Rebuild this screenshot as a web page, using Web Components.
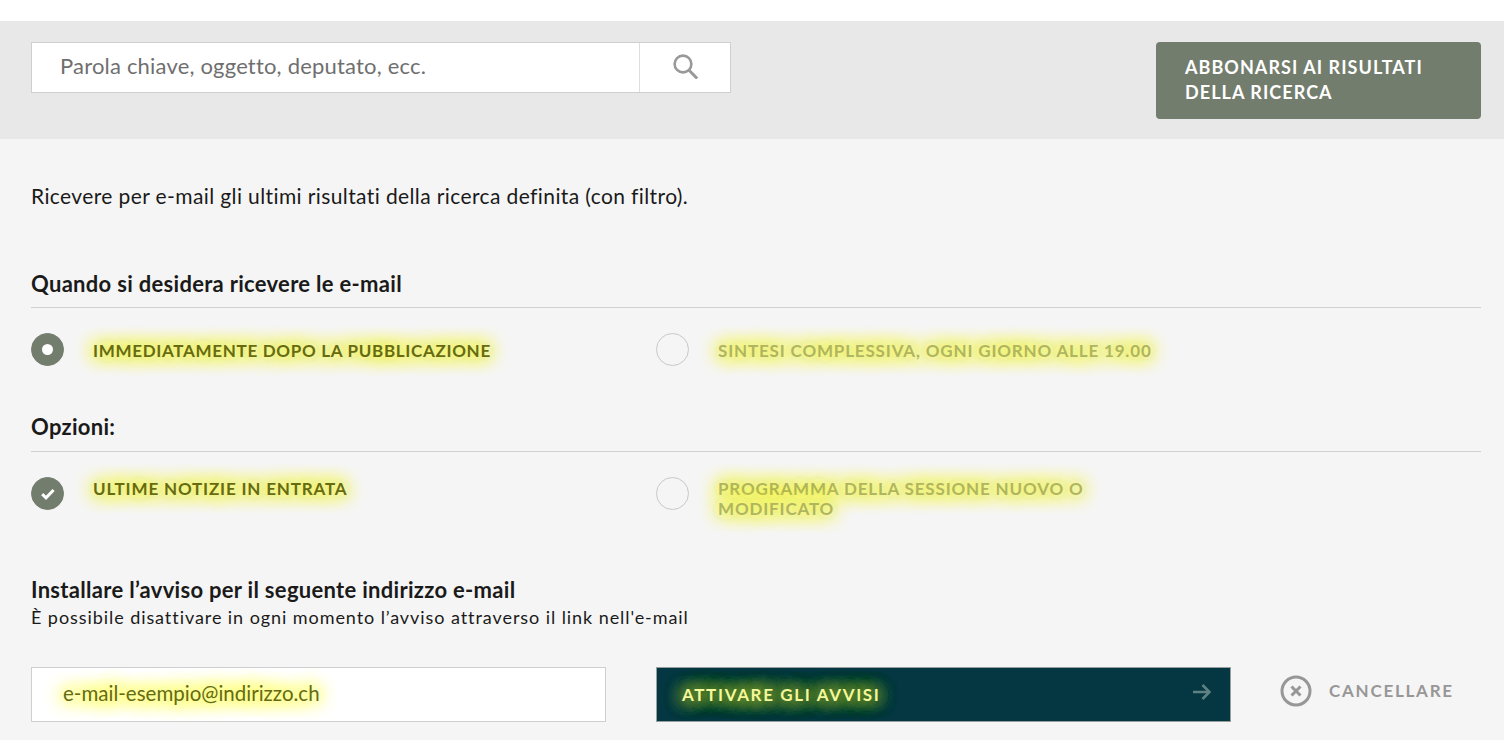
<!DOCTYPE html>
<html lang="it">
<head>
<meta charset="utf-8">
<title>Avvisi</title>
<style>
html, body { margin: 0; height: 740px; overflow: hidden; background: #f5f5f5; }
body { font-family: Lato, "Liberation Sans", sans-serif; color: #1a1a1a; font-variant-ligatures: none; }
</style>
</head>
<body>
<search-band></search-band>
<alert-form></alert-form>

<script>
/* Search bar with the grey band and the subscribe button */
class SearchBand extends HTMLElement {
    constructor() {
        super();
        this.attachShadow({ mode: 'open' });
    }
    connectedCallback() {
        this.shadowRoot.innerHTML = `
            <style>
            :host { display: block; margin-top: 21px; background: #e8e8e8; height: 118px; box-sizing: border-box; padding: 21px 23px 0 31px; }
            .row { display: flex; justify-content: space-between; align-items: flex-start; }
            .search { display: flex; width: 700px; height: 51px; box-sizing: border-box; background: #fff; border: 1px solid #cfcfcf; }
            .field { flex: 1; padding-left: 28px; font-size: 22px; line-height: 46px; letter-spacing: 0.19px; color: #6f6f6f; }
            .btn { flex: none; width: 91px; box-sizing: border-box; border-left: 1px solid #dedede; display: flex; align-items: center; justify-content: center; padding-left: 2px; padding-bottom: 2px; }
            .subscribe { width: 325px; height: 77px; box-sizing: border-box; background: #727d6d; border-radius: 4px; color: #fff; font-weight: 700; font-size: 18px; line-height: 25px; letter-spacing: 1.05px; padding: 13px 29px; }
            </style>
            <div class="row">
                <div class="search">
                    <div class="field">Parola chiave, oggetto, deputato, ecc.</div>
                    <div class="btn">
                        <svg width="26" height="25" viewBox="0 0 26 25" fill="none" stroke="#999" stroke-width="2.6">
                            <circle cx="10" cy="10" r="8.4"/>
                            <path d="M15.8 16l8.4 8.6" stroke-width="3"/>
                        </svg>
                    </div>
                </div>
                <div class="subscribe">ABBONARSI AI RISULTATI<br>DELLA RICERCA</div>
            </div>`;
    }
}

/* Round radio / checkbox with a highlighted label */
class AlertOption extends HTMLElement {
    constructor() {
        super();
        this.attachShadow({ mode: 'open' });
    }
    connectedCallback() {
        const kind = this.getAttribute('kind') || 'off';
        let mark = '';
        if (kind === 'radio') mark = '<span class="dot"></span>';
        if (kind === 'check') mark = '<svg width="16" height="14" viewBox="0 0 16 14"><path d="M2.2 7.2l3.8 3.6 7.6-7.8" fill="none" stroke="#fff" stroke-width="3"/></svg>';
        this.shadowRoot.innerHTML = `
            <style>
            :host { display: flex; align-items: flex-start; width: 625px; flex: none; }
            .mark { flex: none; width: 33px; height: 33px; box-sizing: border-box; border-radius: 50%; display: flex; align-items: center; justify-content: center; border: 1px solid #c8c8c8; margin-right: 29px; }
            :host([kind="radio"]) .mark, :host([kind="check"]) .mark { background: #727d6d; border-color: #727d6d; }
            .dot { width: 11px; height: 11px; border-radius: 50%; background: #fff; }
            .label { width: 460px; margin-top: var(--label-top, 8px); font-size: 17px; line-height: 20px; font-weight: 700; letter-spacing: var(--label-spacing, 0.83px); color: #666b12;
                text-shadow: 0 0 18px #eef23c, 0 0 18px #eef23c, 0 0 18px #eef23c, 0 0 18px #eef23c; }
            :host([kind="off"]) .label { color: #b0b55f; }
            </style>
            <span class="mark">${mark}</span>
            <span class="label"><slot></slot></span>`;
    }
}

/* Section heading with the rule below */
class SectionTitle extends HTMLElement {
    constructor() {
        super();
        this.attachShadow({ mode: 'open' });
    }
    connectedCallback() {
        this.shadowRoot.innerHTML = `
            <style>
            :host { display: block; font-size: 22px; line-height: 30px; letter-spacing: 0.3px; font-weight: 700; color: #1a1a1a; padding-bottom: var(--title-pad, 8px); border-bottom: 1px solid #cfcfcf; }
            </style>
            <slot></slot>`;
    }
}

/* Main form under the search band */
class AlertForm extends HTMLElement {
    constructor() {
        super();
        this.attachShadow({ mode: 'open' });
    }
    connectedCallback() {
        this.shadowRoot.innerHTML = `
            <style>
            :host { display: block; padding: 42px 23px 0 31px; }
            .intro { font-size: 21px; line-height: 30px; letter-spacing: 0.39px; }
            .row { display: flex; margin-top: 25px; }
            section-title.first { margin-top: 58px; }
            section-title.second { margin-top: 46px; --title-pad: 9px; }
            .row.options { --label-top: 2px; margin-top: 25px; }
            .now { --label-spacing: 0.69px; }
            h3 { margin: 57px 0 0; font-size: 22px; line-height: 28px; letter-spacing: 0.3px; font-weight: 700; }
            .note { font-size: 18px; line-height: 26px; letter-spacing: 0.93px; margin-top: 0; }
            .send { display: flex; align-items: center; margin-top: 37px; }
            .mail { width: 575px; height: 55px; box-sizing: border-box; background: #fff; border: 1px solid #cfcfcf; padding-left: 31px; font-size: 20.5px; line-height: 50px; color: #666b12; margin-right: 50px;
                text-shadow: 0 0 18px #f4f84a, 0 0 18px #f4f84a, 0 0 18px #f4f84a, 0 0 18px #f4f84a; }
            .go { width: 575px; height: 55px; box-sizing: border-box; background: #053742; border: 1px solid #97a09d; display: flex; align-items: center; justify-content: space-between; padding: 0 19px 0 25px; font-weight: 700; font-size: 17px; letter-spacing: 1.65px; color: #f4f79a;
                text-shadow: 0 0 18px #7da12b, 0 0 18px #7da12b, 0 0 18px #7da12b, 0 0 18px #7da12b, 0 0 18px #7da12b, 0 0 18px #7da12b; margin-right: 50px; }
            .go svg { margin-top: -5px; }
            .cancel { display: flex; align-items: center; color: #979797; font-weight: 700; font-size: 17px; letter-spacing: 1.75px; margin-top: -8px; }
            .cancel svg { margin-right: 17px; margin-left: -1px; }
            </style>
            <div class="intro">Ricevere per e-mail gli ultimi risultati della ricerca definita (con filtro).</div>
            <section-title class="first">Quando si desidera ricevere le e-mail</section-title>
            <div class="row">
                <alert-option kind="radio" class="now">IMMEDIATAMENTE DOPO LA PUBBLICAZIONE</alert-option>
                <alert-option kind="off">SINTESI COMPLESSIVA, OGNI GIORNO ALLE 19.00</alert-option>
            </div>
            <section-title class="second">Opzioni:</section-title>
            <div class="row options">
                <alert-option kind="check">ULTIME NOTIZIE IN ENTRATA</alert-option>
                <alert-option kind="off">PROGRAMMA DELLA SESSIONE NUOVO O MODIFICATO</alert-option>
            </div>
            <h3>Installare l’avviso per il seguente indirizzo e-mail</h3>
            <div class="note">È possibile disattivare in ogni momento l’avviso attraverso il link nell'e-mail</div>
            <div class="send">
                <div class="mail">e-mail-esempio@indirizzo.ch</div>
                <div class="go">
                    <span>ATTIVARE GLI AVVISI</span>
                    <svg width="18" height="16" viewBox="0 0 18 16" fill="none" stroke="#5f8184" stroke-width="2.6">
                        <path d="M0 8h16.5M9.5 1l7 7-7 7"/>
                    </svg>
                </div>
                <div class="cancel">
                    <svg width="32" height="32" viewBox="0 0 32 32" fill="none" stroke="#979797">
                        <circle cx="16" cy="16" r="14" stroke-width="3"/>
                        <path d="M11.5 11.5l9 9M20.5 11.5l-9 9" stroke-width="3"/>
                    </svg>
                    <span>CANCELLARE</span>
                </div>
            </div>`;
    }
}

customElements.define('search-band', SearchBand);
customElements.define('alert-option', AlertOption);
customElements.define('section-title', SectionTitle);
customElements.define('alert-form', AlertForm);

// white strip at the top of the page
document.body.style.background = 'linear-gradient(#fff 21px, #f5f5f5 21px)';
</script>
</body>
</html>
